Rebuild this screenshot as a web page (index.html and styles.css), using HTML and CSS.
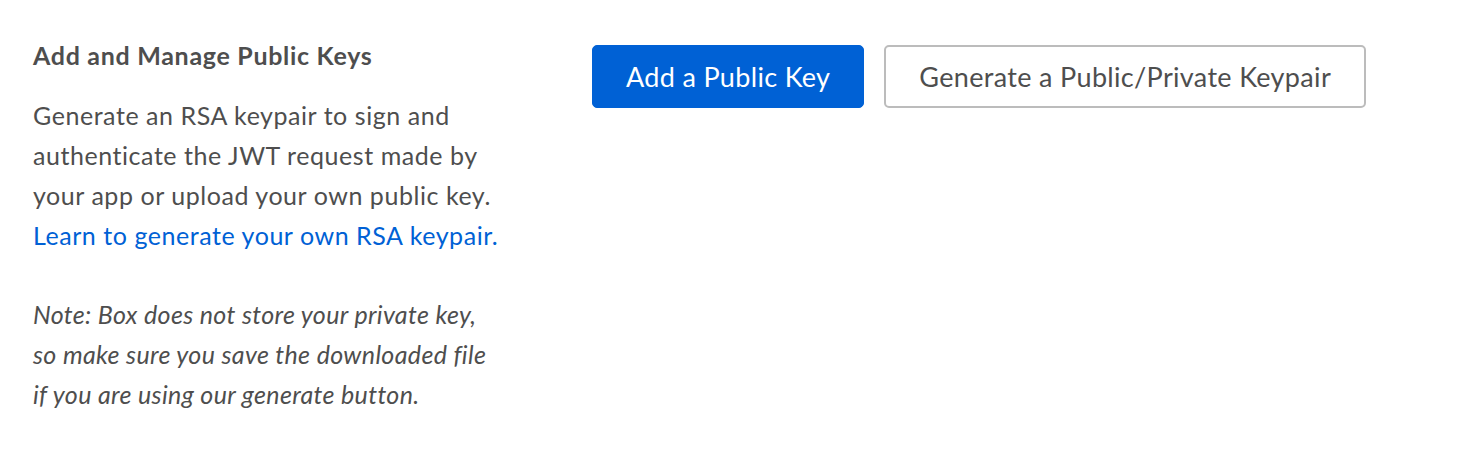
FILE: index.html
```html
<!DOCTYPE html>
<html>
<head>
<meta charset="utf-8">
<link rel="stylesheet" href="styles.css">
</head>
<body>
<div class="section">
  <div class="info">
    <h3 class="title">Add and Manage Public Keys</h3>
    <p class="desc">Generate an RSA keypair to sign and authenticate the JWT request made by your app or upload your own public key. <a class="link" href="#">Learn to generate your own RSA keypair.</a></p>
    <p class="note">Note: Box does not store your private key, so make sure you save the downloaded file if you are using our generate button.</p>
  </div>
  <div class="actions">
    <button class="btn btn-primary">Add a Public Key</button>
    <button class="btn btn-secondary">Generate a Public/Private Keypair</button>
  </div>
</div>
</body>
</html>
```
FILE: styles.css
```css
html, body {
  margin: 0;
  background: #fff;
}
body {
  font-family: Lato, "Open Sans", sans-serif;
  color: #4e4e4e;
}
.section {
  display: flex;
  padding: 39px 33px;
  gap: 91px;
}
.info {
  width: 468px;
  flex: none;
}
.title {
  margin: 0;
  font-size: 25px;
  font-weight: 700;
  line-height: 32px;
  letter-spacing: 0.7px;
  color: #4e4e4e;
}
.desc {
  margin: 24px 0 0;
  font-size: 25px;
  line-height: 40px;
  letter-spacing: 0.55px;
}
.link {
  color: #0061d5;
  text-decoration: none;
  display: block;
}
.note {
  margin: 39px 0 0;
  font-size: 25px;
  font-style: italic;
  line-height: 40px;
  letter-spacing: 0.35px;
}
.actions {
  display: flex;
  gap: 20px;
  align-items: flex-start;
  padding-top: 6px;
}
.btn {
  font-family: Lato, "Open Sans", sans-serif;
  font-size: 27px;
  height: 63px;
  border-radius: 5px;
  padding: 0 33px;
  letter-spacing: 0.33px;
  cursor: pointer;
}
.btn-primary {
  background: #0061d5;
  border: 1px solid #0061d5;
  color: #fff;
}
.btn-secondary {
  background: #fff;
  border: 2px solid #bcbcbc;
  color: #4e4e4e;
}
```
